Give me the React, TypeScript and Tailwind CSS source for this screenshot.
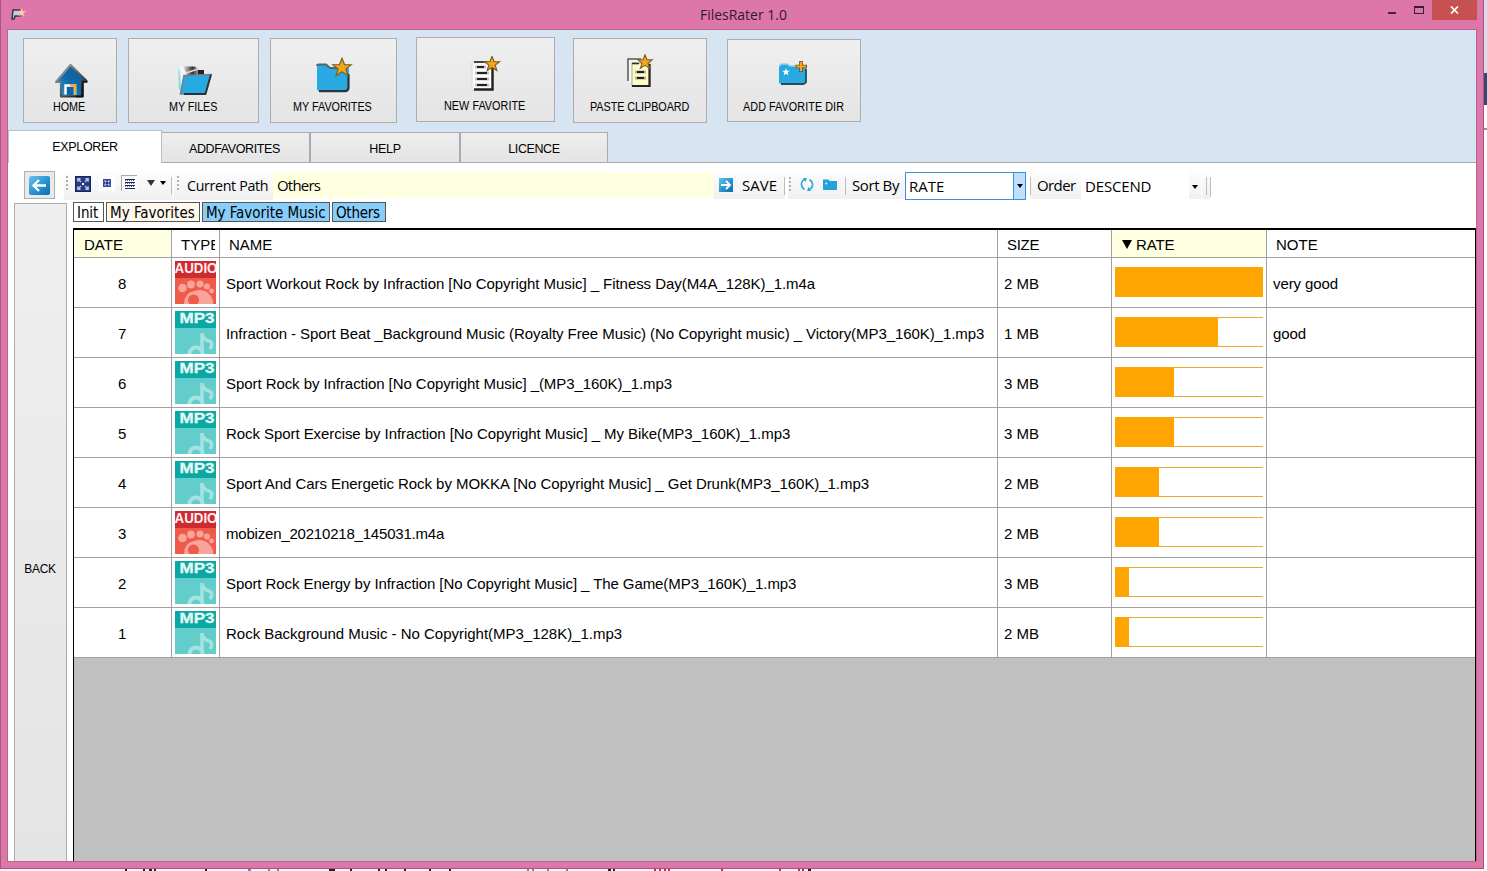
import React from 'react';

const STAR = 'M0 -10 L2.7 -3.2 L10 -3 L4.2 1.5 L6.4 8.6 L0 4.6 L-6.4 8.6 L-4.2 1.5 L-10 -3 L-2.7 -3.2 Z';

const Defs = () => (
  <svg width="0" height="0" className="absolute">
    <defs>
      <linearGradient id="houseBlue" x1="0" y1="1" x2="1" y2="0">
        <stop offset="0" stopColor="#2b9ddb" />
        <stop offset=".5" stopColor="#0d68a8" />
        <stop offset="1" stopColor="#12598a" />
      </linearGradient>
      <linearGradient id="edge" x1="0" y1="0" x2="1" y2="1">
        <stop offset="0" stopColor="#a8b4bc" />
        <stop offset=".5" stopColor="#53606a" />
        <stop offset="1" stopColor="#0c0d10" />
      </linearGradient>
      <linearGradient id="backBlue" x1="0" y1="0" x2="1" y2="1">
        <stop offset="0" stopColor="#6cc0ea" />
        <stop offset=".5" stopColor="#2a97d2" />
        <stop offset="1" stopColor="#0b6db0" />
      </linearGradient>
      <linearGradient id="paperGray" x1="0" y1="0" x2="1" y2="0">
        <stop offset="0" stopColor="#e8e8e8" />
        <stop offset=".6" stopColor="#333" />
        <stop offset="1" stopColor="#aaa" />
      </linearGradient>
    </defs>
  </svg>
);

const HomeIcon = () => (
  <svg width="34" height="35" viewBox="0 0 34 35">
    <path d="M15.5 1 L31.5 17 H27 V32.5 H6 V18 H1 Z" fill="url(#houseBlue)" stroke="url(#edge)" strokeWidth="2.2" strokeLinejoin="round" />
    <path d="M32.5 18 H28 V32.5 H21" fill="none" stroke="#111" strokeWidth="1.6" />
    <path d="M10.5 30.5 V21.5 H20 V31" fill="none" stroke="#fff" strokeWidth="2.4" />
    <path d="M15 21.3 H20.3 V31" fill="none" stroke="#f0a535" strokeWidth="2.2" />
    <rect x="12" y="23" width="6" height="8" fill="#17629a" />
  </svg>
);

const FilesIcon = () => (
  <svg width="35" height="30" viewBox="0 0 35 30">
    <path d="M.5 1 V21 L3 27 V10 Z" fill="#8fdcd8" />
    <path d="M2 1 H10 V20 L3 24 Z" fill="#f4f4f4" />
    <path d="M5 0.500 H17 L21 4 L20 9 H9 Z" fill="url(#paperGray)" />
    <path d="M8 7 L20 3" stroke="#ddd" strokeWidth="1.500" />
    <path d="M20 4 H26 V9 H20 Z" fill="#222" />
    <path d="M6 9.500 L33 8.500 L27 28 H2.500 Z" fill="#29a9e1" stroke="#72818a" strokeWidth="1.600" />
    <path d="M33 8.500 L27.500 28 H6" fill="none" stroke="#26333c" strokeWidth="1.900" />
  </svg>
);

const FavoritesIcon = () => (
  <svg width="38" height="36" viewBox="0 0 38 36">
    <path d="M2 33 V9 Q2 7.5 4 7.5 H11 L15 11 H34 V31 Q34 34 31 34 H4 Q2 34 2 32" fill="#29a9e1" />
    <path d="M2 9 Q2 7.5 4 7.5 H11 L15 11 H22" fill="none" stroke="#506470" strokeWidth="2" />
    <path d="M33.5 17 V31 Q33 34.2 30 34.2 H4" fill="none" stroke="#2a343b" strokeWidth="2.2" />
    <path d={STAR} transform="translate(27 10.5) scale(.92)" fill="#f8a51d" stroke="#79601f" strokeWidth="1.3" />
  </svg>
);

const NewFavoriteIcon = () => (
  <svg width="32" height="36" viewBox="0 0 32 36">
    <rect x="2" y="6" width="21" height="28" fill="#fbfbfb" stroke="#d5d5d5" />
    <path d="M4 6 H18" stroke="#444" strokeWidth="2" />
    <path d="M22.500 8 V33.5 H4" fill="none" stroke="#222" strokeWidth="2.4" />
    <path d="M5 11 H16 M5 17 H19 M5 23 H19 M5 29 H19" stroke="#c0c0c0" strokeWidth="3" />
    <path d="M7 11 H14 M7 17 H17 M7 23 H17 M7 29 H17" stroke="#222" strokeWidth="1.8" />
    <path d={STAR} transform="translate(22 8) scale(.76)" fill="#f8a51d" stroke="#79601f" strokeWidth="1.5" />
  </svg>
);

const PasteIcon = () => (
  <svg width="29" height="35" viewBox="0 0 29 35">
    <path d="M2 5 H16 V28 H2 Z" fill="#f7f7f7" />
    <path d="M2 27 V5 H15" fill="none" stroke="#555" strokeWidth="1.5" />
    <rect x="6" y="9" width="18" height="23" fill="#fdfbcb" stroke="#aaa98c" />
    <path d="M23.500 10 V32 H6" fill="none" stroke="#26251c" strokeWidth="2.2" />
    <path d="M6 9.500 H13" stroke="#333" strokeWidth="1.6" />
    <path d="M9 18 H20 M9 24 H20" stroke="#b8b58b" strokeWidth="3" />
    <path d="M11 18 H18 M11 24 H18" stroke="#222" strokeWidth="1.8" />
    <path d={STAR} transform="translate(19 8) scale(.72)" fill="#f8a51d" stroke="#79601f" strokeWidth="1.5" />
  </svg>
);

const AddDirIcon = () => (
  <svg width="31" height="26" viewBox="0 0 31 26">
    <path d="M1 23 V6 Q2 4 4 4 H9 L12 6 H28 V22 Q27 24 25 24 H3 Z" fill="#29a9e1" />
    <path d="M1 7 Q2 4 4 4 H9 L12 6 H18" fill="none" stroke="#8ed1ef" strokeWidth="1.4" />
    <path d="M28 9 V22 Q27 24 25 24 H3" fill="none" stroke="#244b60" strokeWidth="1.8" />
    <path d={STAR} transform="translate(8 12) scale(.38)" fill="#fff" />
    <path d="M23 1 V12 M17.5 6.5 H29" stroke="#685329" strokeWidth="3.6" />
    <path d="M23 1.8 V11.2 M18.3 6.5 H28" stroke="#f8a51d" strokeWidth="2" />
  </svg>
);

const AudioIcon = () => (
  <svg width="41" height="43" viewBox="0 0 41 43">
    <rect width="41" height="43" fill="#ef5a49" />
    <rect width="41" height="17" fill="#cf2a30" />
    <text x="-.5" y="12" fontFamily="Liberation Sans" fontWeight="700" fontSize="15" textLength="43" lengthAdjust="spacingAndGlyphs" fill="#fbeeee">AUDIO</text>
    <g fill="#f9a49b">
      <circle cx="7.500" cy="27" r="4.300" />
      <circle cx="16" cy="23.500" r="3.900" />
      <circle cx="25" cy="23" r="3.600" />
      <circle cx="32" cy="25.500" r="3" />
      <circle cx="36.500" cy="30" r="2.400" />
      <path d="M9 43 Q9 32 19 30 Q29 27 35 34 Q39 39 38 43 Z" />
    </g>
    <circle cx="18.500" cy="39" r="5.500" fill="#ef5a49" />
  </svg>
);

const Mp3Icon = () => (
  <svg width="41" height="43" viewBox="0 0 41 43">
    <rect width="41" height="43" fill="#62cdca" />
    <rect width="41" height="17" fill="#0aa8a2" />
    <text x="4.500" y="12" fontFamily="Liberation Sans" fontWeight="700" fontSize="15" textLength="35" lengthAdjust="spacingAndGlyphs" fill="#e6f8f7" stroke="#e6f8f7" strokeWidth=".3">MP3</text>
    <path d="M27 22 V41 M27 23 Q29 29 34 30 Q39 32 35 38" fill="none" stroke="#a5e3e1" strokeWidth="3.500" />
    <circle cx="21" cy="43" r="6.500" fill="none" stroke="#a5e3e1" strokeWidth="4" />
  </svg>
);

const Grip = () => (
  <svg width="3" height="16" viewBox="0 0 3 16" shapeRendering="crispEdges">
    <path d="M1 1 V16" stroke="#b0b0b0" strokeWidth="2" strokeDasharray="2 2" />
  </svg>
);

const Caret = ({ big = false }: { big?: boolean }) => (
  <svg width={big ? 8 : 6} height={big ? 6 : 4} viewBox="0 0 8 5" preserveAspectRatio="none">
    <path d="M0 0 H8 L4 5 Z" fill={big ? '#333' : '#000'} />
  </svg>
);

const ExpandIcon = () => (
  <svg width="16" height="16" viewBox="0 0 16 16">
    <rect x=".5" y=".5" width="15" height="15" fill="#2b3c86" stroke="#18235b" />
    <path d="M3 5.500 V3 H5.500 M10.500 3 H13 V5.500 M13 10.500 V13 H10.500 M5.500 13 H3 V10.500" stroke="#dfe6ff" strokeWidth="1.400" fill="none" />
    <path d="M3 3 L6 6 M13 3 L10 6 M13 13 L10 10 M3 13 L6 10" stroke="#b9c4ee" strokeWidth="1.200" />
    <rect x="7" y="7" width="2" height="2" fill="#fff" />
  </svg>
);

const SmallGridIcon = () => (
  <svg width="8" height="8" viewBox="0 0 8 8">
    <rect width="8" height="8" fill="#3b4a93" />
    <path d="M1.500 1.500 L6.500 6.500 M6.500 1.500 L1.500 6.500" stroke="#c5cdf0" strokeWidth="1.200" />
    <rect x="3" y="3" width="2" height="2" fill="#27357e" />
  </svg>
);

const ListIcon = () => (
  <svg width="10" height="10" viewBox="0 0 10 10" shapeRendering="crispEdges">
    <path d="M0 .5 H10 M0 3.500 H10 M0 6.500 H10 M0 9.500 H10" stroke="#1f275e" strokeWidth="1" />
    <path d="M0 1.500 H10 M0 4.500 H10 M0 7.500 H10" stroke="#5a639c" strokeWidth="1" strokeDasharray="1 1" />
  </svg>
);

const actions = [
  { label: 'HOME', Icon: HomeIcon, box: 'w-[94px] h-[85px] mt-2', icon: 'mt-[25px] ml-[31px] h-[35px]', text: 'ml-[29px] tracking-[-0.1px]' },
  { label: 'MY FILES', Icon: FilesIcon, box: 'w-[131px] h-[85px] mt-2 ml-[11px]', icon: 'mt-[27px] ml-[49px] h-[33px]', text: 'ml-[40px] tracking-[-0.1px]' },
  { label: 'MY FAVORITES', Icon: FavoritesIcon, box: 'w-[127px] h-[85px] mt-2 ml-[11px]', icon: 'mt-[18px] ml-[44px] h-[42px]', text: 'ml-[22px]' },
  { label: 'NEW FAVORITE', Icon: NewFavoriteIcon, box: 'w-[139px] h-[85px] mt-[7px] ml-[19px]', icon: 'mt-[18px] ml-[53px] h-[42px]', text: 'ml-[27px] tracking-[0.05px]' },
  { label: 'PASTE CLIPBOARD', Icon: PasteIcon, box: 'w-[134px] h-[85px] mt-2 ml-[18px]', icon: 'mt-[15px] ml-[52px] h-[45px]', text: 'ml-[16px] tracking-[-0.05px]' },
  { label: 'ADD FAVORITE DIR', Icon: AddDirIcon, box: 'w-[134px] h-[83px] mt-[9px] ml-[20px]', icon: 'mt-[20px] ml-[50px] h-[39px]', text: 'ml-[15px] tracking-[0.07px]' },
];

const rows = [
  { n: 8, type: 'audio', name: 'Sport Workout Rock by Infraction [No Copyright Music] _ Fitness Day(M4A_128K)_1.m4a', fit: 'tracking-[-0.05px]', size: '2 MB', rate: 148, note: 'very good' },
  { n: 7, type: 'mp3', name: 'Infraction - Sport Beat _Background Music (Royalty Free Music) (No Copyright music) _ Victory(MP3_160K)_1.mp3', fit: 'tracking-[-0.07px]', size: '1 MB', rate: 103, note: 'good' },
  { n: 6, type: 'mp3', name: 'Sport Rock by Infraction [No Copyright Music] _(MP3_160K)_1.mp3', fit: 'tracking-[-0.065px]', size: '3 MB', rate: 59, note: '' },
  { n: 5, type: 'mp3', name: 'Rock Sport Exercise by Infraction [No Copyright Music] _ My Bike(MP3_160K)_1.mp3', fit: 'tracking-[-0.065px]', size: '3 MB', rate: 59, note: '' },
  { n: 4, type: 'mp3', name: 'Sport And Cars Energetic Rock by MOKKA [No Copyright Music] _ Get Drunk(MP3_160K)_1.mp3', fit: 'tracking-[-0.055px]', size: '2 MB', rate: 44, note: '' },
  { n: 3, type: 'audio', name: 'mobizen_20210218_145031.m4a', fit: 'tracking-[-0.2px]', size: '2 MB', rate: 44, note: '' },
  { n: 2, type: 'mp3', name: 'Sport Rock Energy by Infraction [No Copyright Music] _ The Game(MP3_160K)_1.mp3', fit: 'tracking-[-0.08px]', size: '3 MB', rate: 14, note: '' },
  { n: 1, type: 'mp3', name: 'Rock Background Music - No Copyright(MP3_128K)_1.mp3', fit: 'tracking-[-0.015px]', size: '2 MB', rate: 14, note: '' },
];

const grid = 'grid grid-cols-[98px_48px_778px_114px_155px_1fr]';

const TitleBar = () => (
  <div className="flex h-[29px] shrink-0">
    <svg className="ml-[10px] mt-[7px]" width="15" height="14" viewBox="0 0 15 14">
      <path d="M1 12 L2 3 H10 L9 9 H4 L3 12 Z" fill="#c7cfe5" stroke="#343355" strokeWidth="1.500" />
      <path d={STAR} transform="translate(10.500 5.500) scale(.42)" fill="#ffd3a6" stroke="#f4b5b5" />
    </svg>
    <div className="ml-[674px] mt-[5px] w-[560px] whitespace-nowrap font-['Open_Sans',sans-serif] text-[14px] leading-[20px] tracking-[-0.02px] text-[#35172a]">FilesRater 1.0</div>
    <div className="ml-[128px] mt-[12px] h-[2px] w-[8px] bg-[#4d1c3c]" />
    <div className="ml-[18px] mt-[6px] h-[8px] w-[10px] border border-t-2 border-[#3c1a30]" />
    <div className="ml-[8px] flex h-[20px] w-[45px] items-center justify-center bg-[#c75050]">
      <svg width="9" height="8" viewBox="0 0 9 8"><path d="M1 .5 L8 7.500 M8 .5 L1 7.500" stroke="#fff" strokeWidth="1.700" /></svg>
    </div>
  </div>
);

const Ribbon = () => (
  <div className="flex h-[100px] shrink-0 items-start pl-[15px]">
    {actions.map(({ label, Icon, box, icon, text }) => (
      <button key={label} className={`flex shrink-0 flex-col items-start border border-[#adadad] bg-linear-to-b from-[#efefef] to-[#e4e4e4] ${box}`}>
        <span className={`block shrink-0 ${icon}`}><Icon /></span>
        <span className={`mt-px block origin-left scale-x-90 whitespace-nowrap text-[12px] leading-[14px] ${text}`}>{label}</span>
      </button>
    ))}
  </div>
);

const tab = 'mt-[2px] h-[31px] shrink-0 border border-[#a5abb0] bg-linear-to-b from-[#eeeeee] to-[#e4e4e4] pt-[8px] text-center text-[12.5px] leading-[16px]';

const Tabs = () => (
  <div className="flex h-[33px] shrink-0">
    <div className="h-[33px] w-[154px] border border-b-0 border-[#b5c0c9] bg-white pt-[8px] text-center text-[12.5px] leading-[16px] tracking-[-0.35px]">EXPLORER</div>
    <div className={`${tab} w-[148px] border-l-0 pr-[2px] tracking-[-0.38px]`}>ADDFAVORITES</div>
    <div className={`${tab} w-[150px] tracking-[-0.3px]`}>HELP</div>
    <div className={`${tab} w-[148px] tracking-[-0.4px]`}>LICENCE</div>
    <div className="flex-1 border-b border-[#a5abb0]" />
  </div>
);

const strip = 'flex h-[28px] items-start bg-linear-to-b from-[#fdfdfd] to-[#f0f0f0]';
const label = "whitespace-nowrap font-['Open_Sans',sans-serif] text-[15px] leading-[20px]";

const Toolbar = () => (
  <div className="flex h-[30px] shrink-0 items-start">
    <div className="ml-[16px] flex h-[28px] w-[31px] items-center justify-center border border-[#b0b0b0] bg-[#e9e9e9]">
      <svg width="21" height="19" viewBox="0 0 21 19">
        <rect width="21" height="19" rx="2" fill="url(#backBlue)" />
        <path d="M17 9.500 H5 M10 4 L4.500 9.500 L10 15" fill="none" stroke="#fff" strokeWidth="2.300" />
      </svg>
    </div>
    <div className={`${strip} ml-[9px] mt-px h-[24px] w-[109px] pl-[2px]`}>
      <span className="pt-[3px]"><Grip /></span>
      <span className="ml-[6px] pt-[4px]"><ExpandIcon /></span>
      <span className="ml-[8px] mt-[3px] flex h-[16px] w-[16px] items-center justify-center bg-white"><SmallGridIcon /></span>
      <span className="ml-[6px] mt-[3px] flex h-[16px] w-[16px] items-center justify-center border-l border-t border-[#aaa] bg-[#fafafa]"><ListIcon /></span>
      <span className="ml-[10px] pt-[8px]"><Caret big /></span>
      <span className="ml-[5px] pt-[9px]"><Caret /></span>
      <span className="ml-[5px] mt-[5px] h-[17px] w-px bg-[#bdbdbd]" />
    </div>
    <div className={`${strip} ml-px mt-px h-[26px] w-[99px] pl-[3px]`}>
      <span className="pt-[3px]"><Grip /></span>
      <span className={`${label} ml-[7px] origin-left scale-x-95 pt-[3px] tracking-[-0.35px]`}>Current Path</span>
    </div>
    <div className={`${label} mt-px h-[26px] w-[441px] bg-[#ffffe1] pl-[4px] pt-[3px] tracking-[-0.8px]`}>Others</div>
    <div className={`${strip} w-[71px] pl-[5px]`}>
      <svg className="mt-[7px]" width="14" height="14" viewBox="0 0 14 14">
        <rect width="14" height="14" fill="url(#backBlue)" />
        <path d="M2 7 H11 M7 3 L11 7 L7 11" fill="none" stroke="#fff" strokeWidth="1.800" />
      </svg>
      <span className={`${label} ml-[9px] pt-[4px]`}>SAVE</span>
      <span className="ml-auto mt-[6px] h-[18px] w-px bg-[#bdbdbd]" />
    </div>
    <div className={`${strip} ml-[3px] w-[117px] pl-[1px]`}>
      <span className="pt-[5px]"><Grip /></span>
      <svg className="ml-[8px] mt-[7px]" width="14" height="13" viewBox="0 0 14 13">
        <path d="M5 1.500 Q1 3 1.500 7 Q2 10 4.500 11.500 M9 11.500 Q13 10 12.500 6 Q12 3 9.500 1.500" fill="none" stroke="#2aa6dc" strokeWidth="1.600" />
        <path d="M3 0 H7 L5.500 4 Z M11 13 H7 L8.500 9 Z" fill="#2aa6dc" />
      </svg>
      <svg className="ml-[9px] mt-[8px]" width="14" height="12" viewBox="0 0 13 12" preserveAspectRatio="none">
        <path d="M0 .5 H5 L6.500 2 H13 V11 H0 Z" fill="#24a3da" /><circle cx="3" cy="4.500" r="1" fill="#d6f1fd" />
      </svg>
      <span className="ml-[8px] mt-[6px] h-[18px] w-px bg-[#bdbdbd]" />
      <span className={`${label} ml-[6px] pt-[4px] tracking-[-0.4px]`}>Sort By</span>
    </div>
    <div className="mt-px flex h-[28px] w-[121px] border border-[#3c8fd8] bg-white">
      <span className={`${label} flex-1 pl-[3px] pt-[3px]`}>RATE</span>
      <span className="flex w-[12px] items-center justify-center border-l border-[#3c8fd8] bg-[#bfdfff]"><Caret /></span>
    </div>
    <div className={`${strip} ml-[4px] w-[51px]`}>
      <span className="mt-[6px] h-[18px] w-px bg-[#bdbdbd]" />
      <span className={`${label} ml-[6px] pt-[4px] tracking-[-0.6px]`}>Order</span>
    </div>
    <div className={`${label} w-[108px] pl-[4px] pt-[5px] tracking-[-0.15px]`}>DESCEND</div>
    <div className="flex h-[28px] w-[12px] items-center justify-center bg-linear-to-b from-[#fdfdfd] to-[#f0f0f0] pt-[3px]"><Caret /></div>
    <div className={`${strip} ml-px w-[8px] pl-[4px]`}><span className="mt-[6px] h-[18px] w-px bg-[#bdbdbd]" /></div>
    <div className="mt-[6px] h-[20px] w-px bg-[#bbb]" />
  </div>
);

const crumb = "h-[20px] shrink-0 whitespace-nowrap border border-[#555] pl-[3px] pt-px font-['DejaVu_Sans',sans-serif] text-[15px] leading-[19px] [font-stretch:condensed]";

const Crumbs = () => (
  <div className="flex h-[26px] shrink-0 items-start gap-[2px]">
    <div className={`${crumb} w-[31px] bg-white tracking-[-0.1px]`}>Init</div>
    <div className={`${crumb} w-[94px] bg-[#fff8ec]`}>My Favorites</div>
    <div className={`${crumb} w-[128px] bg-[#87cefa] tracking-[-0.05px]`}>My Favorite Music</div>
    <div className={`${crumb} w-[54px] bg-[#87cefa] tracking-[-0.25px]`}>Others</div>
  </div>
);

const headCell = 'overflow-hidden whitespace-nowrap pt-[6px] leading-[18px]';
const cell = 'border-r border-[#a0a0a0] leading-[52px] whitespace-nowrap';

const Table = () => (
  <div className="flex w-[1403px] flex-1 flex-col border-l border-t-2 border-r border-black bg-[#c0c0c0] text-[15px]">
    <div className={`${grid} h-[28px] shrink-0 border-b border-[#a0a0a0] bg-white`}>
      <div className={`${headCell} border-r border-[#a0a0a0] bg-[#ffffe1] pl-[10px]`}>DATE</div>
      <div className="flex border-r border-[#a0a0a0]"><div className={`${headCell} ml-[9px] w-[34px]`}>TYPE</div></div>
      <div className={`${headCell} border-r border-[#a0a0a0] pl-[9px]`}>NAME</div>
      <div className={`${headCell} border-r border-[#a0a0a0] pl-[9px] tracking-[-0.3px]`}>SIZE</div>
      <div className={`${headCell} flex border-r border-[#a0a0a0] bg-[#ffffe1] pl-[10px] tracking-[-0.1px]`}>
        <svg className="mr-[4px] mt-[4px]" width="10" height="9" viewBox="0 0 10 9"><path d="M0 0 H10 L5 9 Z" /></svg>
        RATE
      </div>
      <div className={`${headCell} pl-[9px]`}>NOTE</div>
    </div>
    {rows.map((r) => (
      <div key={r.n} className={`${grid} h-[50px] shrink-0 border-b border-[#a0a0a0] bg-white`}>
        <div className={`${cell} h-[49px] pl-[44px]`}>{r.n}</div>
        <div className={`${cell} h-[49px] pl-[3px] pt-[3px]`}>{r.type === 'audio' ? <AudioIcon /> : <Mp3Icon />}</div>
        <div className={`${cell} h-[49px] pl-[6px] ${r.fit}`}>{r.name}</div>
        <div className={`${cell} h-[49px] pl-[6px]`}>{r.size}</div>
        <div className={`${cell} h-[49px] pl-[3px] pt-[9px]`}>
          <div className="h-[30px] w-[148px] border-y border-[#e8a92e]">
            <div className="-mt-px h-[30px] bg-[#ffa500]" style={{ width: r.rate }} />
          </div>
        </div>
        <div className="h-[49px] whitespace-nowrap pl-[6px] leading-[52px] tracking-[-0.1px]">{r.note}</div>
      </div>
    ))}
  </div>
);

export default function App() {
  return (
    <div className="relative h-[871px] w-[1487px] overflow-hidden bg-white font-['Liberation_Sans',Arial,sans-serif] text-black">
      <Defs />
      <div className="flex h-[869px]">
        <div className="flex w-[1484px] shrink-0 flex-col border-b border-l border-r border-[#a95582] bg-[#dd77aa]">
          <TitleBar />
          <div className="ml-[6px] flex h-[833px] w-[1470px] flex-col border border-[#b8648d] bg-[#d7e4f2]">
            <Ribbon />
            <Tabs />
            <div className="flex min-h-0 flex-1 flex-col bg-white pt-[8px]">
              <Toolbar />
              <div className="mt-px flex min-h-0 flex-1">
                <div className="ml-[6px] mt-px flex w-[53px] shrink-0 items-center justify-center border border-b-0 border-[#adadad] bg-linear-to-b from-[#efefef] to-[#e4e4e4] pr-px pt-[72px] text-[12px] tracking-[-0.3px]">BACK</div>
                <div className="ml-[6px] flex min-w-0 flex-1 flex-col">
                  <Crumbs />
                  <Table />
                </div>
              </div>
            </div>
          </div>
        </div>
        <div className="w-[3px]">
          <div className="h-[73px] bg-[#d5dcea]" />
          <div className="h-[32px] bg-[#304b73]" />
          <div className="h-[23px]" />
          <div className="h-[2px] bg-[#9095a5]" />
        </div>
      </div>
      <div className="h-[2px] overflow-hidden bg-[#fdf3f8]">
        <svg width="900" height="2" viewBox="0 0 900 2" className="block" shapeRendering="crispEdges">
          <path d="M125 1 H127 M143 1 H145 M149 1 H152 M154 1 H156 M205 1 H207 M329 1 H335 M350 1 H352 M378 1 H380 M385 1 H387 M404 1 H406 M429 1 H431 M449 1 H451 M608 1 H611 M613 1 H615 M808 1 H811" stroke="#222" strokeWidth="2" />
          <path d="M248 1 H251 M268 1 H270 M277 1 H279 M527 1 H529 M532 1 H534 M547 1 H549 M566 1 H568" stroke="#5f8eb5" strokeWidth="2" />
          <path d="M654 1 H656 M659 1 H661 M664 1 H666 M668 1 H670 M721 1 H723 M779 1 H781 M798 1 H800 M802 1 H804" stroke="#b8324a" strokeWidth="2" />
        </svg>
      </div>
    </div>
  );
}
